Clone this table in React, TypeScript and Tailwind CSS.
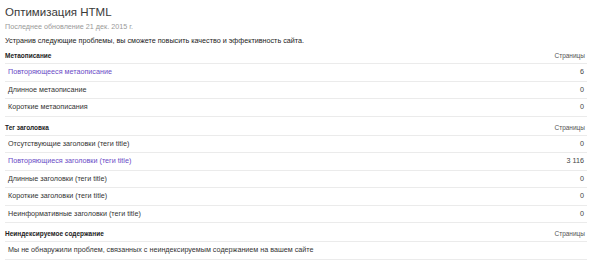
type Row = { label: string; pages?: string; link?: boolean }

type Section = { title: string; rows: Row[] }

const sections: Section[] = [
  {
    title: 'Метаописание',
    rows: [
      { label: 'Повторяющееся метаописание', pages: '6', link: true },
      { label: 'Длинное метаописание', pages: '0' },
      { label: 'Короткие метаописания', pages: '0' },
    ],
  },
  {
    title: 'Тег заголовка',
    rows: [
      { label: 'Отсутствующие заголовки (теги title)', pages: '0' },
      { label: 'Повторяющиеся заголовки (теги title)', pages: '3 116', link: true },
      { label: 'Длинные заголовки (теги title)', pages: '0' },
      { label: 'Короткие заголовки (теги title)', pages: '0' },
      { label: 'Неинформативные заголовки (теги title)', pages: '0' },
    ],
  },
  {
    title: 'Неиндексируемое содержание',
    rows: [{ label: 'Мы не обнаружили проблем, связанных с неиндексируемым содержанием на вашем сайте' }],
  },
]

function IssueTable({ section, first }: { section: Section; first?: boolean }) {
  return (
    <div>
      <div
        className={`flex items-end justify-between pb-[3px] pr-[2px] text-[6.5px] leading-[8px] ${
          first ? 'h-[17px]' : 'h-[18px]'
        }`}
      >
        <span className="font-bold text-[#222]">{section.title}</span>
        <span className="text-[#555]">Страницы</span>
      </div>
      {section.rows.map((r) => (
        <div
          key={r.label}
          className="flex h-[17.5px] items-center justify-between border-t border-[#ebebeb] px-[3px] text-[7.2px] leading-[10px]"
        >
          <span className={r.link ? 'text-[#6a4bc6]' : 'text-[#333]'}>{r.label}</span>
          {r.pages && <span className="text-[#444]">{r.pages}</span>}
        </div>
      ))}
      <div className="border-t border-[#ebebeb]" />
    </div>
  )
}

export default function App() {
  return (
    <div
      className="h-[264px] w-[600px] overflow-hidden bg-white pl-[5px] pr-[13px]"
      style={{ fontFamily: '"Liberation Sans", Arial, sans-serif' }}
    >
      <h1 className="pt-[5px] text-[11.5px] leading-[14px] text-[#3a3a3a]">Оптимизация HTML</h1>
      <p className="mt-[3px] text-[7.2px] leading-[10px] text-[#999]">Последнее обновление 21 дек. 2015 г.</p>
      <p className="mt-[3px] text-[7.2px] leading-[11px] text-[#222]">
        Устранив следующие проблемы, вы сможете повысить качество и эффективность сайта.
      </p>
      {sections.map((s, i) => (
        <IssueTable key={s.title} section={s} first={i === 0} />
      ))}
    </div>
  )
}
